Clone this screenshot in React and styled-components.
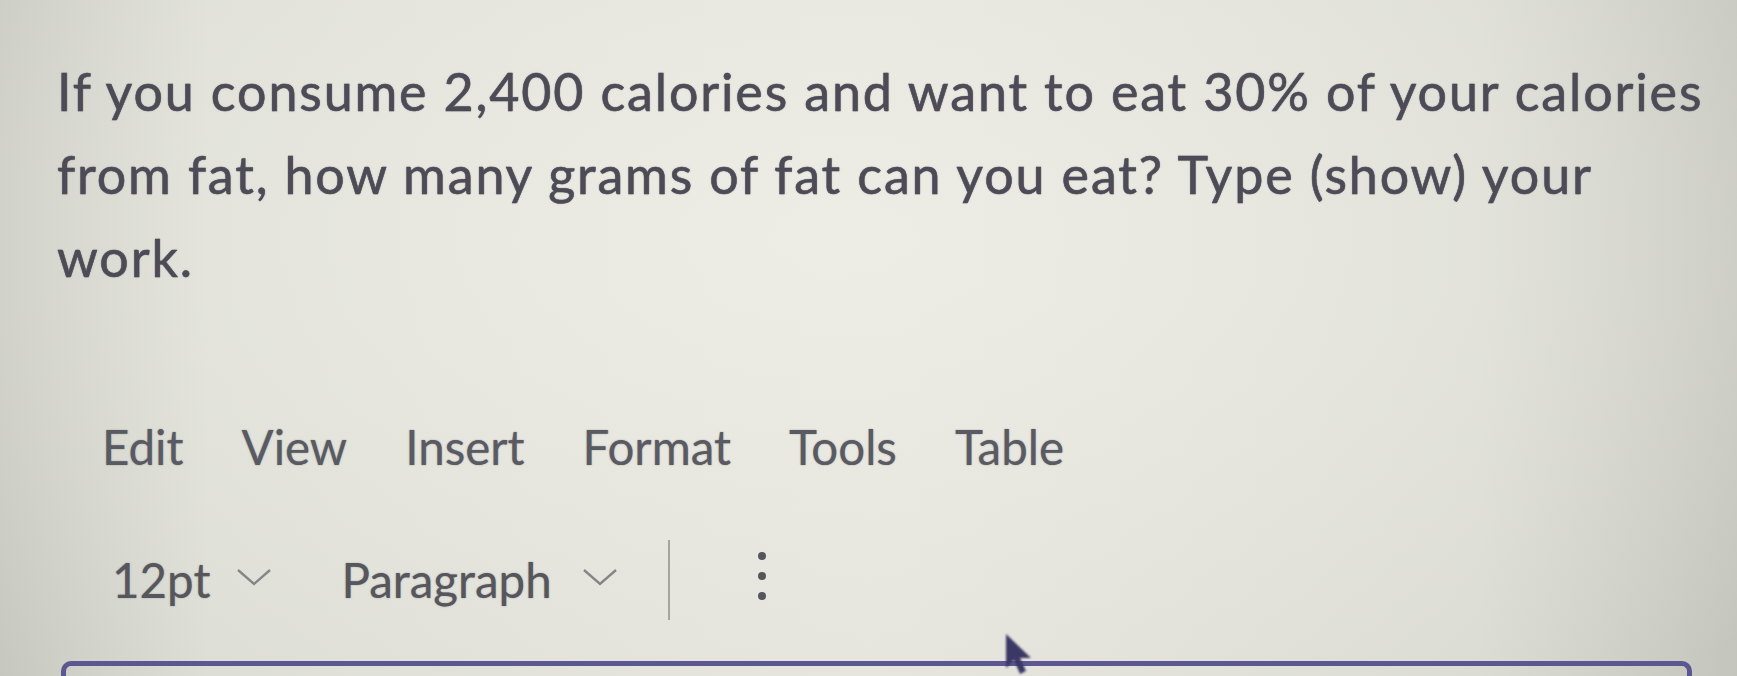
import styled, { createGlobalStyle } from "styled-components";

const GlobalStyle = createGlobalStyle`
  html, body {
    margin: 0;
    padding: 0;
  }
  body {
    font-family: Lato, "Noto Sans", "Liberation Sans", sans-serif;
  }
`;

const Page = styled.div`
  position: relative;
  width: 1737px;
  height: 676px;
  overflow: hidden;
  box-sizing: border-box;
  padding-left: 57px;
  display: flex;
  flex-direction: column;
  background:
    radial-gradient(ellipse 70% 90% at 48% 35%, rgba(238, 238, 231, 0.9), rgba(238, 238, 231, 0) 100%),
    linear-gradient(90deg, #c6c7be 0%, #dbdcd4 12%, #e3e3dc 50%, #d9dad2 85%, #c4c5bd 100%);
`;

const Question = styled.p`
  margin: 50px 0 0;
  max-width: 1662px;
  font-size: 52px;
  letter-spacing: 1.85px;
  line-height: 83px;
  color: #4c4b56;
  -webkit-text-stroke: 0.5px #4c4b56;
  text-shadow: 0 0 1.5px rgba(76, 75, 86, 0.6);
`;

const MenuBar = styled.nav`
  display: flex;
  gap: 58px;
  margin: 119px 0 0 45px;
`;

const MenuItem = styled.span`
  font-size: 47.5px;
  line-height: 58px;
  color: #5a5a62;
  text-shadow: 0 0 1.5px rgba(90, 90, 98, 0.6);
`;

const Toolbar = styled.div`
  display: flex;
  align-items: center;
  margin: 64px 0 0 55px;
  height: 80px;
`;

const Select = styled.div`
  display: flex;
  align-items: center;
  gap: ${(p) => p.$gap}px;
  margin-right: ${(p) => p.$after}px;
  font-size: 47.5px;
  line-height: 58px;
  color: #56565c;
  text-shadow: 0 0 1.5px rgba(86, 86, 92, 0.6);
`;

const Chevron = styled.svg`
  width: 36px;
  height: 20px;
  flex: none;
  margin-top: -6px;
`;

const Divider = styled.div`
  width: 2px;
  height: 80px;
  background: #a4a5a0;
  margin-right: 88px;
`;

const MoreDots = styled.div`
  display: flex;
  flex-direction: column;
  gap: 12px;
  margin-top: -8px;

  span {
    width: 8px;
    height: 8px;
    border-radius: 50%;
    background: #55555e;
  }
`;

const Editor = styled.div`
  margin: 41px 0 0 4px;
  width: 1631px;
  flex: 1;
  box-sizing: border-box;
  border: 5px solid #5a5792;
  border-bottom: none;
  border-radius: 10px 10px 0 0;
  filter: blur(0.6px);
`;

const Pointer = styled.svg`
  position: absolute;
  left: 1003px;
  top: 632px;
  width: 30px;
  height: 44px;
  filter: blur(1.2px);
`;

function Down() {
  return (
    <Chevron viewBox="0 0 36 20">
      <path d="M2 3 L18 17 L34 3" fill="none" stroke="#86868a" strokeWidth="2.4" />
    </Chevron>
  );
}

export default function App() {
  return (
    <>
      <GlobalStyle />
      <Page>
        <Question>
          If you consume 2,400 calories and want to eat 30% of your calories from fat, how many grams of fat can
          you eat? Type (show) your work.
        </Question>
        <MenuBar>
          {["Edit", "View", "Insert", "Format", "Tools", "Table"].map((m) => (
            <MenuItem key={m}>{m}</MenuItem>
          ))}
        </MenuBar>
        <Toolbar>
          <Select $gap={26} $after={69}>
            12pt
            <Down />
          </Select>
          <Select $gap={30} $after={50}>
            Paragraph
            <Down />
          </Select>
          <Divider />
          <MoreDots>
            <span />
            <span />
            <span />
          </MoreDots>
        </Toolbar>
        <Editor />
        <Pointer viewBox="0 0 30 44">
          <path d="M3 2 L3 36 L11 28 L17 42 L23 39 L17 26 L28 26 Z" fill="#3b3866" />
        </Pointer>
      </Page>
    </>
  );
}
